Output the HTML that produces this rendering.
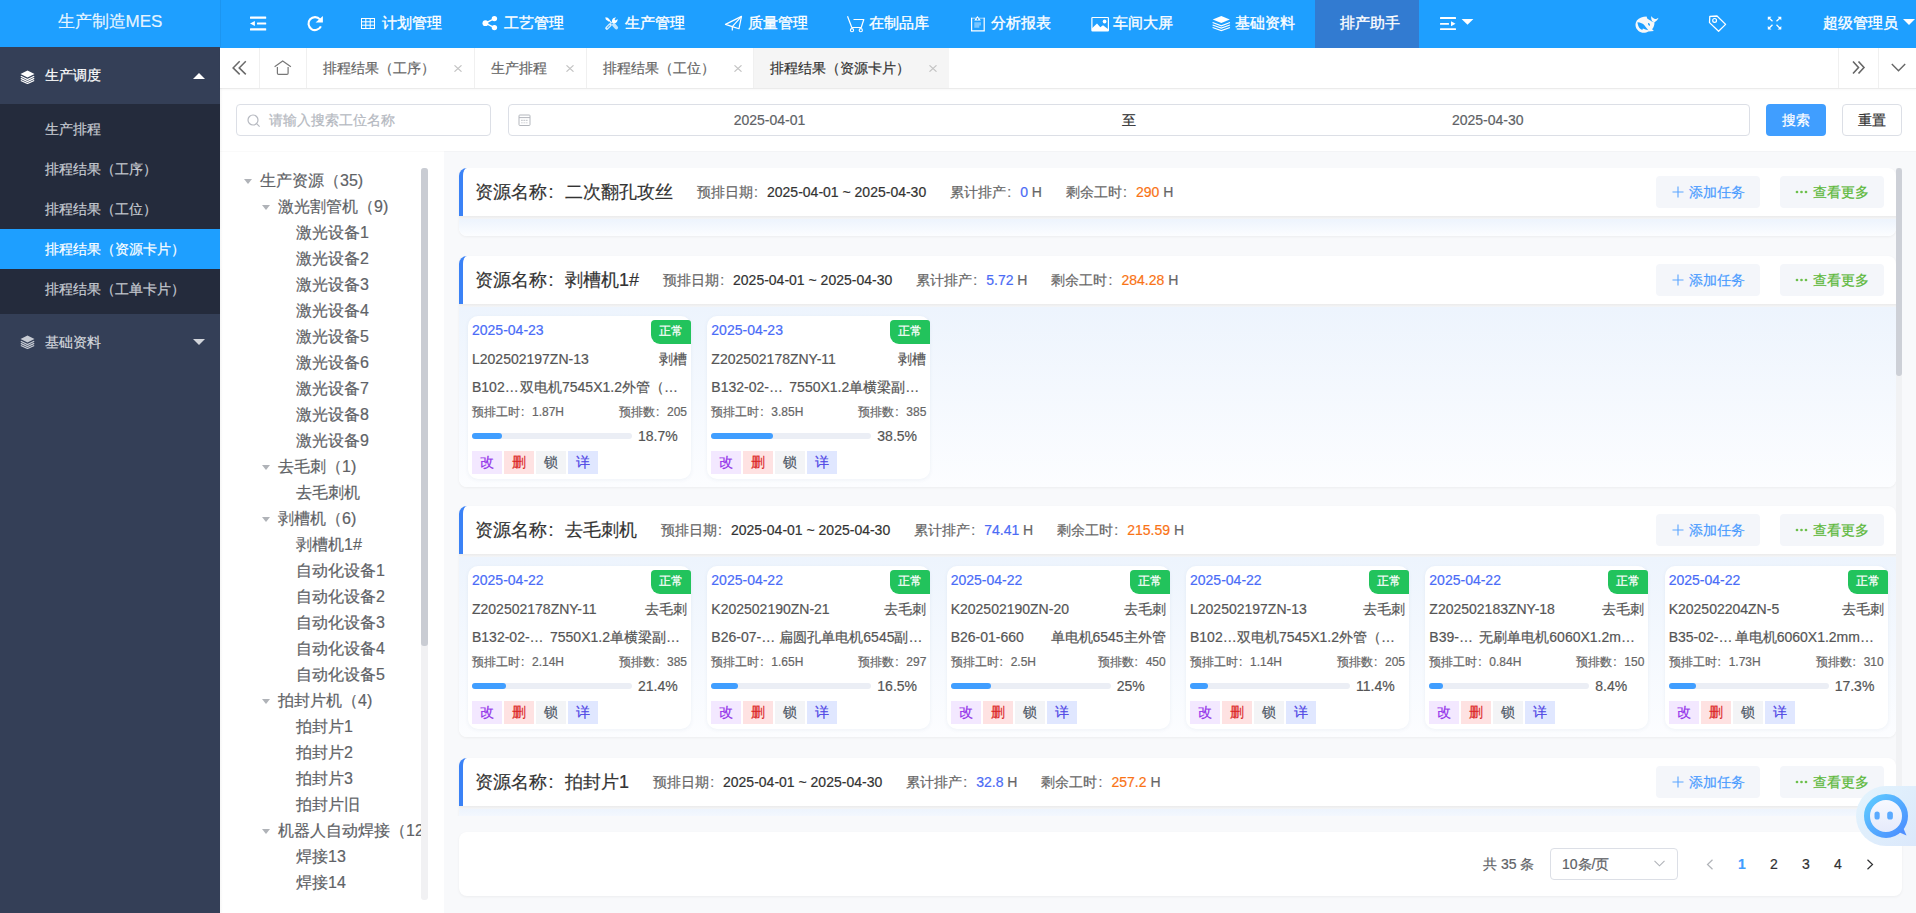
<!DOCTYPE html><html><head><meta charset="utf-8"><title>MES</title><style>
*{box-sizing:border-box;margin:0;padding:0}
html,body{width:1916px;height:913px;overflow:hidden;background:#fff;font-family:"Liberation Sans",sans-serif;font-size:14px;color:#333;-webkit-text-stroke-width:0.2px}
.abs{position:absolute}
.t{position:absolute;white-space:nowrap}
svg{display:block}
.c{display:inline-block;width:1em;text-indent:.08em}
#sidebar{position:absolute;left:0;top:0;width:220px;height:913px;background:#343f57}
#logo{position:absolute;left:0;top:0;width:220px;height:47px;background:#1e9fff;color:rgba(255,255,255,.88);font-size:17px;text-align:center;line-height:44px}
.mh{position:absolute;left:0;width:220px;color:#fff;font-size:14px}
.sub{position:absolute;left:0;top:104px;width:220px;height:210px;background:#242b3c}
.si{position:absolute;left:0;width:220px;height:40px;line-height:40px;padding-left:45px;color:#c6cad1;font-size:14px}
.si.act{background:#1e9fff;color:#fff}
#navbar{position:absolute;left:220px;top:0;width:1696px;height:48px;background:#1e9fff}
.nt{position:absolute;top:0;height:47px;line-height:46px;color:#fff;font-size:15px;white-space:nowrap;-webkit-text-stroke:0.35px #fff}
#tabs{position:absolute;left:220px;top:48px;width:1696px;height:41px;background:#fff;border-bottom:1px solid #ebebeb;box-shadow:0 1px 2px rgba(0,0,0,.03)}
.tab{position:absolute;top:0;height:40px;line-height:40px;font-size:14px;color:#666;border-left:1px solid #f0f0f0;white-space:nowrap}
.tab .x{position:absolute;top:17px;width:8px;height:7px}
#tree{position:absolute;left:220px;top:151px;width:224px;height:762px;background:#fff}
.tn{position:absolute;height:26px;line-height:26px;font-size:16px;color:#606266;white-space:nowrap}
.caret{position:absolute;width:0;height:0;border-left:4.5px solid transparent;border-right:4.5px solid transparent;border-top:5px solid #b0b3b8}
#right{position:absolute;left:444px;top:151px;width:1472px;height:762px;background:#f8f9fb}
.rc{position:absolute;left:459px;width:1437px;background:#fff;border-radius:8px;box-shadow:0 1px 3px rgba(0,0,0,.05)}
.rh{position:absolute;left:0;top:0;width:1437px;height:48px;border-left:4px solid #3b82f6;border-radius:8px 0 0 0}
.band{position:absolute;left:0;top:48px;width:1437px;height:3px;background:linear-gradient(#ebebeb,#f4f5f7)}
.rb{position:absolute;left:0;top:51px;width:1437px;background:linear-gradient(#edf4fd,#fcfdff);border-radius:0 0 8px 8px}
.btn2{position:absolute;top:8px;width:104px;height:32px;background:#f4f6fa;border-radius:4px;font-size:14px;line-height:32px;white-space:nowrap}
.tc{position:absolute;width:223px;height:163px;background:#fff;border-radius:10px;box-shadow:0 1px 4px rgba(30,60,120,.06)}
.badge{position:absolute;right:0;top:4px;width:40px;height:24px;background:#22c35c;color:#fff;font-size:12px;line-height:23px;text-align:center;border-radius:4px 3px 0 9px}
.pb{position:absolute;left:4px;top:117px;width:160px;height:6px;background:#ebeef5;border-radius:3px}
.pf{position:absolute;left:0;top:0;height:6px;background:#409eff;border-radius:3px}
.ab{position:absolute;top:135px;width:30px;height:23px;font-size:14px;line-height:23px;text-align:center}
</style></head><body><div id="sidebar"><div id="logo">生产制造MES</div><div class="mh" style="top:47px;height:57px"><svg class="abs" style="left:20px;top:23px" width="15" height="14" viewBox="0 0 15 14"><path d="M7.5 0.5 L14.5 4 L7.5 7.5 L0.5 4 Z" fill="#fff"/><path d="M0.8 6.2 L7.5 9.6 L14.2 6.2" fill="none" stroke="#fff" stroke-width="1.2"/><path d="M0.8 8.4 L7.5 11.6 L14.2 8.4" fill="none" stroke="#fff" stroke-width="1.2"/><path d="M0.8 10.5 L7.5 13.5 L14.2 10.5" fill="none" stroke="#fff" stroke-width="1.2"/></svg><div class="t" style="left:45px;top:0;line-height:57px">生产调度</div><div class="abs" style="left:193px;top:26px;width:0;height:0;border-left:6px solid transparent;border-right:6px solid transparent;border-bottom:6px solid #fff"></div></div><div class="sub"><div class="si" style="top:5px">生产排程</div><div class="si" style="top:45px">排程结果（工序）</div><div class="si" style="top:85px">排程结果（工位）</div><div class="si act" style="top:125px">排程结果（资源卡片）</div><div class="si" style="top:165px">排程结果（工单卡片）</div></div><div class="mh" style="top:314px;height:56px;color:#d2d5db"><svg class="abs" style="left:20px;top:21px" width="15" height="14" viewBox="0 0 15 14"><path d="M7.5 0.5 L14.5 4 L7.5 7.5 L0.5 4 Z" fill="#c8ccd4"/><path d="M0.8 6.2 L7.5 9.6 L14.2 6.2" fill="none" stroke="#c8ccd4" stroke-width="1.2"/><path d="M0.8 8.4 L7.5 11.6 L14.2 8.4" fill="none" stroke="#c8ccd4" stroke-width="1.2"/><path d="M0.8 10.5 L7.5 13.5 L14.2 10.5" fill="none" stroke="#c8ccd4" stroke-width="1.2"/></svg><div class="t" style="left:45px;top:0;line-height:56px">基础资料</div><div class="abs" style="left:193px;top:25px;width:0;height:0;border-left:6px solid transparent;border-right:6px solid transparent;border-top:6px solid #d2d5db"></div></div></div><div id="navbar"><div class="abs" style="left:0;top:0;width:1px;height:47px;background:rgba(0,0,0,.06)"></div><svg class="abs" style="left:30px;top:15px" width="17" height="16" viewBox="0 0 17 16"><rect x="0" y="1.6" width="16.2" height="2.1" rx="0.5" fill="#fff"/><rect x="7" y="7.4" width="9.2" height="2.1" rx="0.5" fill="#fff"/><path d="M0 8.5L4.9 6V11Z" fill="#fff"/><rect x="0" y="13.3" width="16.2" height="2.1" rx="0.5" fill="#fff"/></svg><svg class="abs" style="left:87px;top:15px" width="17" height="17" viewBox="0 0 17 17"><path d="M12.98 4.42 A6.5 6.5 0 1 0 13.9 11.35" fill="none" stroke="#fff" stroke-width="2.1"/><path d="M8.6 7.6L15.9 7.6L15.9 1.1Z" fill="#fff"/></svg><svg class="abs" style="left:141px;top:18px" width="14" height="11" viewBox="0 0 14 11"><rect x="0.5" y="0.5" width="13" height="10" fill="none" stroke="#fff" stroke-width="1"/><path d="M0 3.8H14M0 7.2H14M4.8 0V11M9.2 0V11" stroke="#fff" stroke-width="1"/></svg><div class="nt" style="left:162px">计划管理</div><svg class="abs" style="left:262px;top:15px" width="16" height="16" viewBox="0 0 16 16"><circle cx="12.4" cy="3.6" r="2.7" fill="#fff"/><circle cx="3.4" cy="8.2" r="2.9" fill="#fff"/><circle cx="12.4" cy="12.6" r="2.7" fill="#fff"/><path d="M3.4 8.2L12.4 3.6M3.4 8.2L12.4 12.6" stroke="#fff" stroke-width="1.5"/></svg><div class="nt" style="left:284px">工艺管理</div><svg class="abs" style="left:384px;top:16px" width="15" height="15" viewBox="0 0 15 15"><path d="M1.3 1.3L3.8 1.8L6.4 4.4L5 5.8L1.8 3.6Z" fill="#fff"/><path d="M5.8 5.2L7.6 7" stroke="#fff" stroke-width="1.1"/><path d="M2.9 12.1L6.1 8.9" stroke="rgba(255,255,255,.85)" stroke-width="3.4" stroke-linecap="round"/><path d="M3.4 11.6L5.6 9.4" stroke="#1e9fff" stroke-width="1.2" stroke-linecap="round" opacity=".7"/><path d="M9.8 8.8L12.3 11.6" stroke="rgba(255,255,255,.72)" stroke-width="3.6" stroke-linecap="round"/><path d="M8.2 6.8C7.5 5.1 8 3.1 9.6 2C10.4 1.5 11.3 1.3 12.1 1.5L10.5 3.3L11.7 4.5L13.5 3C13.8 4.6 13.1 6.2 11.7 7C10.6 7.6 9.3 7.6 8.2 6.8Z" fill="#fff"/></svg><div class="nt" style="left:405px">生产管理</div><svg class="abs" style="left:504px;top:15px" width="19" height="17" viewBox="0 0 19 17"><path d="M17.5 1.4L1.5 9.4L8.3 11.6L15 13.7Z" fill="none" stroke="#fff" stroke-width="1.2" stroke-linejoin="round"/><path d="M17.5 1.4L8.3 11.6V15.5" fill="none" stroke="#fff" stroke-width="1.2" stroke-linejoin="round"/></svg><div class="nt" style="left:528px">质量管理</div><svg class="abs" style="left:626px;top:15px" width="19" height="18" viewBox="0 0 19 18"><path d="M1.5 1.3L5.8 12.5H15.2L17.8 4.5H7.5" fill="none" stroke="#fff" stroke-width="1.2" stroke-linejoin="round"/><circle cx="6" cy="15.2" r="1.6" fill="none" stroke="#fff" stroke-width="1.1"/><circle cx="14.8" cy="15.2" r="1.6" fill="none" stroke="#fff" stroke-width="1.1"/></svg><div class="nt" style="left:649px">在制品库</div><svg class="abs" style="left:750px;top:15px" width="15" height="17" viewBox="0 0 15 17"><path d="M1.6 2.8V15.9H14.2V2.8" fill="none" stroke="#fff" stroke-width="1.2"/><path d="M1 3.2H14.8" stroke="rgba(255,255,255,.6)" stroke-width="1"/><path d="M7.4 1.1L4.3 5.6H10.8Z" fill="#fff"/><circle cx="7.5" cy="4" r="0.9" fill="#1e9fff"/><path d="M4.3 7.2H11V10.6H9.3V12.7H4.3Z" fill="rgba(255,255,255,.4)"/></svg><div class="nt" style="left:771px">分析报表</div><svg class="abs" style="left:871px;top:15px" width="19" height="17" viewBox="0 0 19 17"><rect x="0.9" y="2.5" width="16.5" height="13.3" rx="0.6" fill="none" stroke="#fff" stroke-width="1.2"/><path d="M1 13.2L6 8.5L9.3 12.2L12 10.2L17.3 14.2V15.9H1Z" fill="#fff"/><circle cx="13.6" cy="6.5" r="1.9" fill="#fff"/></svg><div class="nt" style="left:893px">车间大屏</div><svg class="abs" style="left:992px;top:15px" width="19" height="17" viewBox="0 0 19 17"><path d="M0.7 4.5L9.3 1L17.8 4.5L9.3 7.9Z" fill="#fff"/><path d="M0.6 7.6L9.3 10.8L18 7.6M0.6 10L9.3 13.1L18 10M0.6 12.5L9.3 15.6L18 12.5" fill="none" stroke="#fff" stroke-width="1.1"/></svg><div class="nt" style="left:1015px">基础资料</div><div class="abs" style="left:1095px;top:0;width:104px;height:48px;background:#327bd1"></div><div class="nt" style="left:1120px">排产助手</div><svg class="abs" style="left:1220px;top:15px" width="34" height="16" viewBox="0 0 34 16"><rect x="0" y="2.1" width="16" height="1.8" rx="0.5" fill="#fff"/><rect x="0" y="7.9" width="9" height="1.8" rx="0.5" fill="#fff"/><path d="M11 6.3L15.5 8.8L11 11.3Z" fill="#fff"/><rect x="0" y="13.3" width="16" height="1.8" rx="0.5" fill="#fff"/><path d="M21.6 4H33.4L27.5 9.7Z" fill="#fff"/></svg><svg class="abs" style="left:1415px;top:15px" width="25" height="19" viewBox="0 0 25 19"><path d="M11.6 1.4C8 1.6 4 2.5 1.8 5.5C-0.5 9 0.3 13.5 3.5 16C6 18.2 10.5 18.4 13.4 16.5L18.9 15.9L17.1 14.3C18.8 12.5 19.5 10 19.5 7.3L17.1 6.7C15.5 5.5 13.5 4.5 12.2 3.6Z" fill="#f8f8f8"/><path d="M16.2 1.1C16 3.5 16.5 5.5 17.4 6.6L19.5 7.3C21.5 6 23 4.5 23.5 2.7C22 3.8 20.8 4.2 20 4C18.5 3.5 17 2.5 16.2 1.1Z" fill="#f8f8f8"/><path d="M2.4 7.3C5.5 7.5 8 8.5 9.4 10.3C11 12.3 12.2 14 13.4 15.2C11.5 14.8 9.5 14 7.9 13.4L7.3 14.9C5 14.3 3.2 12.2 2.4 7.3Z" fill="#1e9fff"/><ellipse cx="14" cy="9.4" rx="0.8" ry="1.5" transform="rotate(-30 14 9.4)" fill="#1e9fff"/></svg><svg class="abs" style="left:1488px;top:15px" width="19" height="18" viewBox="0 0 19 18"><path d="M1.8 1.4L9 1L17.6 9.4L10.6 16.2L1.5 7.6Z" fill="none" stroke="#fff" stroke-width="1.3" stroke-linejoin="round"/><circle cx="6.6" cy="5.4" r="1.9" fill="none" stroke="#fff" stroke-width="1.2"/></svg><svg class="abs" style="left:1547px;top:16px" width="15" height="14" viewBox="0 0 15 14"><path d="M0.8 0.7H4.5L0.8 4.3ZM14.3 0.7H10.6L14.3 4.3ZM0.8 13.6H4.5L0.8 10ZM14.3 13.6H10.6L14.3 10Z" fill="#fff"/><path d="M2 2L5.5 5.2M13 2L9.5 5.2M2 12.3L5.5 8.8M13 12.3L9.5 8.8" stroke="#fff" stroke-width="1.3"/></svg><div class="nt" style="left:1603px">超级管理员</div><div class="abs" style="left:1683px;top:19px;width:0;height:0;border-left:6px solid transparent;border-right:6px solid transparent;border-top:6px solid #fff"></div></div><div id="tabs"><svg class="abs" style="left:12px;top:12px" width="16" height="16" viewBox="0 0 16 16"><path d="M7.7 1.3L1.1 7.9L7.7 14.4M13.8 1.3L7.2 7.9L13.8 14.4" fill="none" stroke="#6a6a6a" stroke-width="1.5"/></svg><div class="abs" style="left:39px;top:0;width:1px;height:40px;background:#f0f0f0"></div><svg class="abs" style="left:54px;top:11px" width="18" height="17" viewBox="0 0 18 17"><path d="M0.6 7.7L8.7 2.1L16.9 7.7" fill="none" stroke="#777" stroke-width="1.2"/><path d="M3.4 8V14.2Q3.4 15.4 4.6 15.4H12.9Q14.1 15.4 14.1 14.2V8" fill="none" stroke="#777" stroke-width="1.2"/></svg><div class="tab" style="left:86px;width:168px;"><span class="t" style="left:16px;top:0">排程结果（工序）</span><svg class="x" style="left:147px" viewBox="0 0 8 7"><path d="M0.5 0.3L7.5 6.7M7.5 0.3L0.5 6.7" stroke="#c2c2c2" stroke-width="1.1"/></svg></div><div class="tab" style="left:254px;width:112px;"><span class="t" style="left:16px;top:0">生产排程</span><svg class="x" style="left:91px" viewBox="0 0 8 7"><path d="M0.5 0.3L7.5 6.7M7.5 0.3L0.5 6.7" stroke="#c2c2c2" stroke-width="1.1"/></svg></div><div class="tab" style="left:366px;width:168px;"><span class="t" style="left:16px;top:0">排程结果（工位）</span><svg class="x" style="left:147px" viewBox="0 0 8 7"><path d="M0.5 0.3L7.5 6.7M7.5 0.3L0.5 6.7" stroke="#c2c2c2" stroke-width="1.1"/></svg></div><div class="tab" style="left:533px;width:196px;background:#f5f5f5;color:#333;"><span class="t" style="left:16px;top:0">排程结果（资源卡片）</span><svg class="x" style="left:175px" viewBox="0 0 8 7"><path d="M0.5 0.3L7.5 6.7M7.5 0.3L0.5 6.7" stroke="#c2c2c2" stroke-width="1.1"/></svg></div><div class="abs" style="left:1618px;top:0;width:1px;height:40px;background:#f0f0f0"></div><svg class="abs" style="left:1632px;top:12px" width="14" height="15" viewBox="0 0 14 15"><path d="M1 1.5L6.5 7.5L1 13.5M6.5 1.5L12 7.5L6.5 13.5" fill="none" stroke="#666" stroke-width="1.6"/></svg><div class="abs" style="left:1658px;top:0;width:1px;height:40px;background:#f0f0f0"></div><svg class="abs" style="left:1671px;top:15px" width="15" height="9" viewBox="0 0 15 9"><path d="M0.8 1L7.5 7.8L14.2 1" fill="none" stroke="#666" stroke-width="1.4"/></svg></div><div class="abs" style="left:236px;top:104px;width:255px;height:32px;border:1px solid #dcdfe6;border-radius:4px"></div><svg class="abs" style="left:247px;top:113.7px" width="14" height="14" viewBox="0 0 14 14"><circle cx="6" cy="6" r="5" fill="none" stroke="#b6b9c0" stroke-width="1.2"/><path d="M9.6 9.6L12.6 12.6" stroke="#b6b9c0" stroke-width="1.2"/></svg><div class="t" style="left:269px;top:104px;line-height:32px;color:#b4b8c0;font-size:14px">请输入搜索工位名称</div><div class="abs" style="left:508px;top:104px;width:1242px;height:32px;border:1px solid #dcdfe6;border-radius:4px"></div><svg class="abs" style="left:518px;top:114px" width="13" height="12" viewBox="0 0 13 12"><rect x="1" y="1" width="11" height="10.5" rx="0.8" fill="none" stroke="#b4b7bd" stroke-width="1"/><path d="M1 3.6H12" stroke="#b4b7bd" stroke-width="1"/><path d="M3 6.3H10" stroke="#b8bbc1" stroke-width="0.9" stroke-dasharray="1.8 0.6"/><path d="M3 8.8H10" stroke="#d0d2d6" stroke-width="0.9" stroke-dasharray="1.8 0.6"/></svg><div class="t" style="left:669.5px;width:200px;text-align:center;top:104px;line-height:32px;color:#606266">2025-04-01</div><div class="t" style="left:1029px;width:200px;text-align:center;top:104px;line-height:32px;color:#303133">至</div><div class="t" style="left:1387.7px;width:200px;text-align:center;top:104px;line-height:32px;color:#606266">2025-04-30</div><div class="abs" style="left:1766px;top:104px;width:60px;height:32px;background:#409eff;border-radius:4px;color:#fff;text-align:center;line-height:32px">搜索</div><div class="abs" style="left:1842px;top:104px;width:60px;height:32px;border:1px solid #dcdfe6;border-radius:4px;color:#333;text-align:center;line-height:30px">重置</div><div id="tree"><div class="abs" style="left:0;top:0;width:201px;height:762px;overflow:hidden"><div class="caret" style="left:24px;top:28px"></div><div class="tn" style="left:40px;top:17px">生产资源（35)</div><div class="caret" style="left:42px;top:54px"></div><div class="tn" style="left:58px;top:43px">激光割管机（9)</div><div class="tn" style="left:76px;top:69px">激光设备1</div><div class="tn" style="left:76px;top:95px">激光设备2</div><div class="tn" style="left:76px;top:121px">激光设备3</div><div class="tn" style="left:76px;top:147px">激光设备4</div><div class="tn" style="left:76px;top:173px">激光设备5</div><div class="tn" style="left:76px;top:199px">激光设备6</div><div class="tn" style="left:76px;top:225px">激光设备7</div><div class="tn" style="left:76px;top:251px">激光设备8</div><div class="tn" style="left:76px;top:277px">激光设备9</div><div class="caret" style="left:42px;top:314px"></div><div class="tn" style="left:58px;top:303px">去毛刺（1)</div><div class="tn" style="left:76px;top:329px">去毛刺机</div><div class="caret" style="left:42px;top:366px"></div><div class="tn" style="left:58px;top:355px">剥槽机（6)</div><div class="tn" style="left:76px;top:381px">剥槽机1#</div><div class="tn" style="left:76px;top:407px">自动化设备1</div><div class="tn" style="left:76px;top:433px">自动化设备2</div><div class="tn" style="left:76px;top:459px">自动化设备3</div><div class="tn" style="left:76px;top:485px">自动化设备4</div><div class="tn" style="left:76px;top:511px">自动化设备5</div><div class="caret" style="left:42px;top:548px"></div><div class="tn" style="left:58px;top:537px">拍封片机（4)</div><div class="tn" style="left:76px;top:563px">拍封片1</div><div class="tn" style="left:76px;top:589px">拍封片2</div><div class="tn" style="left:76px;top:615px">拍封片3</div><div class="tn" style="left:76px;top:641px">拍封片旧</div><div class="caret" style="left:42px;top:678px"></div><div class="tn" style="left:58px;top:667px">机器人自动焊接（12)</div><div class="tn" style="left:76px;top:693px">焊接13</div><div class="tn" style="left:76px;top:719px">焊接14</div></div><div class="abs" style="left:201px;top:17px;width:7px;height:732px;background:#f1f1f3;border-radius:3px"></div><div class="abs" style="left:201px;top:17px;width:7px;height:478px;background:#c9ccd3;border-radius:3px"></div></div><div id="right"></div><div class="abs" style="left:220px;top:88px;width:3px;height:825px;background:linear-gradient(90deg,rgba(0,0,0,.035),rgba(0,0,0,0))"></div><div class="abs" style="left:220px;top:151px;width:1696px;height:1px;background:rgba(0,0,0,.02)"></div><div class="abs" style="left:0;top:168px;width:1916px;height:648px;overflow:hidden"><div class="rc" style="top:0px;height:68px"><div class="rh"></div><div class="band"></div><div class="abs" style="left:16px;top:0;height:48px;display:flex;align-items:center;white-space:nowrap;gap:24px"><span style="font-size:18px;color:#333">资源名称<span class="c">:</span>二次翻孔攻丝</span><span style="color:#666;position:relative;top:1px">预排日期<span class="c">:</span><span style="color:#333">2025-04-01 ~ 2025-04-30</span></span><span style="color:#666;position:relative;top:1px">累计排产<span class="c">:</span><span style="color:#4b6bf5">0</span> H</span><span style="color:#666;position:relative;top:1px">剩余工时<span class="c">:</span><span style="color:#f97316">290</span> H</span></div><div class="btn2" style="left:1197px;color:#4b9cff"><svg class="abs" style="left:16px;top:10px" width="12" height="12" viewBox="0 0 12 12"><path d="M6 0.5V11.5M0.5 6H11.5" stroke="#5aa5ff" stroke-width="1.1"/></svg><span class="t" style="left:33px;top:0">添加任务</span></div><div class="btn2" style="left:1321px;color:#5cb83a"><svg class="abs" style="left:15px;top:14px" width="13" height="4" viewBox="0 0 13 4"><circle cx="2" cy="2" r="1.35" fill="#6cc04a"/><circle cx="6.5" cy="2" r="1.35" fill="#6cc04a"/><circle cx="11" cy="2" r="1.35" fill="#6cc04a"/></svg><span class="t" style="left:33px;top:0">查看更多</span></div><div class="rb" style="height:17px"></div></div><div class="rc" style="top:88px;height:231px"><div class="rh"></div><div class="band"></div><div class="abs" style="left:16px;top:0;height:48px;display:flex;align-items:center;white-space:nowrap;gap:24px"><span style="font-size:18px;color:#333">资源名称<span class="c">:</span>剥槽机1#</span><span style="color:#666;position:relative;top:1px">预排日期<span class="c">:</span><span style="color:#333">2025-04-01 ~ 2025-04-30</span></span><span style="color:#666;position:relative;top:1px">累计排产<span class="c">:</span><span style="color:#4b6bf5">5.72</span> H</span><span style="color:#666;position:relative;top:1px">剩余工时<span class="c">:</span><span style="color:#f97316">284.28</span> H</span></div><div class="btn2" style="left:1197px;color:#4b9cff"><svg class="abs" style="left:16px;top:10px" width="12" height="12" viewBox="0 0 12 12"><path d="M6 0.5V11.5M0.5 6H11.5" stroke="#5aa5ff" stroke-width="1.1"/></svg><span class="t" style="left:33px;top:0">添加任务</span></div><div class="btn2" style="left:1321px;color:#5cb83a"><svg class="abs" style="left:15px;top:14px" width="13" height="4" viewBox="0 0 13 4"><circle cx="2" cy="2" r="1.35" fill="#6cc04a"/><circle cx="6.5" cy="2" r="1.35" fill="#6cc04a"/><circle cx="11" cy="2" r="1.35" fill="#6cc04a"/></svg><span class="t" style="left:33px;top:0">查看更多</span></div><div class="rb" style="height:180px"><div class="tc" style="left:9.00px;top:9px"><div class="t" style="left:4px;top:6px;line-height:16px;color:#4a6cf7">2025-04-23</div><div class="badge">正常</div><div class="t" style="left:4px;top:34.5px;line-height:16px;color:#555">L202502197ZN-13</div><div class="t" style="right:4px;top:34.5px;line-height:16px;color:#555">剥槽</div><div class="t" style="left:4px;top:62.7px;line-height:16px;color:#555">B102…</div><div class="t" style="left:52px;top:62.7px;line-height:16px;color:#555">双电机7545X1.2外管（…</div><div class="t" style="left:4px;top:89px;line-height:14px;font-size:12px;color:#666">预排工时<span class="c">:</span>1.87H</div><div class="t" style="right:4px;top:89px;line-height:14px;font-size:12px;color:#666">预排数<span class="c">:</span>205</div><div class="pb"><div class="pf" style="width:29.9px"></div></div><div class="t" style="left:170px;top:111.7px;line-height:16px;color:#555">18.7%</div><div class="ab" style="left:4px;background:#f3e8ff;color:#9333ea">改</div><div class="ab" style="left:36px;background:#fee2e2;color:#dc2626">删</div><div class="ab" style="left:68px;background:#f3f4f6;color:#4b5563">锁</div><div class="ab" style="left:100px;background:#e0e7ff;color:#4f46e5">详</div></div><div class="tc" style="left:248.33px;top:9px"><div class="t" style="left:4px;top:6px;line-height:16px;color:#4a6cf7">2025-04-23</div><div class="badge">正常</div><div class="t" style="left:4px;top:34.5px;line-height:16px;color:#555">Z202502178ZNY-11</div><div class="t" style="right:4px;top:34.5px;line-height:16px;color:#555">剥槽</div><div class="t" style="left:4px;top:62.7px;line-height:16px;color:#555">B132-02-…</div><div class="t" style="left:82px;top:62.7px;line-height:16px;color:#555">7550X1.2单横梁副…</div><div class="t" style="left:4px;top:89px;line-height:14px;font-size:12px;color:#666">预排工时<span class="c">:</span>3.85H</div><div class="t" style="right:4px;top:89px;line-height:14px;font-size:12px;color:#666">预排数<span class="c">:</span>385</div><div class="pb"><div class="pf" style="width:61.6px"></div></div><div class="t" style="left:170px;top:111.7px;line-height:16px;color:#555">38.5%</div><div class="ab" style="left:4px;background:#f3e8ff;color:#9333ea">改</div><div class="ab" style="left:36px;background:#fee2e2;color:#dc2626">删</div><div class="ab" style="left:68px;background:#f3f4f6;color:#4b5563">锁</div><div class="ab" style="left:100px;background:#e0e7ff;color:#4f46e5">详</div></div></div></div><div class="rc" style="top:338px;height:231px"><div class="rh"></div><div class="band"></div><div class="abs" style="left:16px;top:0;height:48px;display:flex;align-items:center;white-space:nowrap;gap:24px"><span style="font-size:18px;color:#333">资源名称<span class="c">:</span>去毛刺机</span><span style="color:#666;position:relative;top:1px">预排日期<span class="c">:</span><span style="color:#333">2025-04-01 ~ 2025-04-30</span></span><span style="color:#666;position:relative;top:1px">累计排产<span class="c">:</span><span style="color:#4b6bf5">74.41</span> H</span><span style="color:#666;position:relative;top:1px">剩余工时<span class="c">:</span><span style="color:#f97316">215.59</span> H</span></div><div class="btn2" style="left:1197px;color:#4b9cff"><svg class="abs" style="left:16px;top:10px" width="12" height="12" viewBox="0 0 12 12"><path d="M6 0.5V11.5M0.5 6H11.5" stroke="#5aa5ff" stroke-width="1.1"/></svg><span class="t" style="left:33px;top:0">添加任务</span></div><div class="btn2" style="left:1321px;color:#5cb83a"><svg class="abs" style="left:15px;top:14px" width="13" height="4" viewBox="0 0 13 4"><circle cx="2" cy="2" r="1.35" fill="#6cc04a"/><circle cx="6.5" cy="2" r="1.35" fill="#6cc04a"/><circle cx="11" cy="2" r="1.35" fill="#6cc04a"/></svg><span class="t" style="left:33px;top:0">查看更多</span></div><div class="rb" style="height:180px"><div class="tc" style="left:9.00px;top:9px"><div class="t" style="left:4px;top:6px;line-height:16px;color:#4a6cf7">2025-04-22</div><div class="badge">正常</div><div class="t" style="left:4px;top:34.5px;line-height:16px;color:#555">Z202502178ZNY-11</div><div class="t" style="right:4px;top:34.5px;line-height:16px;color:#555">去毛刺</div><div class="t" style="left:4px;top:62.7px;line-height:16px;color:#555">B132-02-…</div><div class="t" style="left:82px;top:62.7px;line-height:16px;color:#555">7550X1.2单横梁副…</div><div class="t" style="left:4px;top:89px;line-height:14px;font-size:12px;color:#666">预排工时<span class="c">:</span>2.14H</div><div class="t" style="right:4px;top:89px;line-height:14px;font-size:12px;color:#666">预排数<span class="c">:</span>385</div><div class="pb"><div class="pf" style="width:34.2px"></div></div><div class="t" style="left:170px;top:111.7px;line-height:16px;color:#555">21.4%</div><div class="ab" style="left:4px;background:#f3e8ff;color:#9333ea">改</div><div class="ab" style="left:36px;background:#fee2e2;color:#dc2626">删</div><div class="ab" style="left:68px;background:#f3f4f6;color:#4b5563">锁</div><div class="ab" style="left:100px;background:#e0e7ff;color:#4f46e5">详</div></div><div class="tc" style="left:248.33px;top:9px"><div class="t" style="left:4px;top:6px;line-height:16px;color:#4a6cf7">2025-04-22</div><div class="badge">正常</div><div class="t" style="left:4px;top:34.5px;line-height:16px;color:#555">K202502190ZN-21</div><div class="t" style="right:4px;top:34.5px;line-height:16px;color:#555">去毛刺</div><div class="t" style="left:4px;top:62.7px;line-height:16px;color:#555">B26-07-…</div><div class="t" style="left:72px;top:62.7px;line-height:16px;color:#555">扁圆孔单电机6545副…</div><div class="t" style="left:4px;top:89px;line-height:14px;font-size:12px;color:#666">预排工时<span class="c">:</span>1.65H</div><div class="t" style="right:4px;top:89px;line-height:14px;font-size:12px;color:#666">预排数<span class="c">:</span>297</div><div class="pb"><div class="pf" style="width:26.4px"></div></div><div class="t" style="left:170px;top:111.7px;line-height:16px;color:#555">16.5%</div><div class="ab" style="left:4px;background:#f3e8ff;color:#9333ea">改</div><div class="ab" style="left:36px;background:#fee2e2;color:#dc2626">删</div><div class="ab" style="left:68px;background:#f3f4f6;color:#4b5563">锁</div><div class="ab" style="left:100px;background:#e0e7ff;color:#4f46e5">详</div></div><div class="tc" style="left:487.67px;top:9px"><div class="t" style="left:4px;top:6px;line-height:16px;color:#4a6cf7">2025-04-22</div><div class="badge">正常</div><div class="t" style="left:4px;top:34.5px;line-height:16px;color:#555">K202502190ZN-20</div><div class="t" style="right:4px;top:34.5px;line-height:16px;color:#555">去毛刺</div><div class="t" style="left:4px;top:62.7px;line-height:16px;color:#555">B26-01-660</div><div class="t" style="right:4px;top:62.7px;line-height:16px;color:#555">单电机6545主外管</div><div class="t" style="left:4px;top:89px;line-height:14px;font-size:12px;color:#666">预排工时<span class="c">:</span>2.5H</div><div class="t" style="right:4px;top:89px;line-height:14px;font-size:12px;color:#666">预排数<span class="c">:</span>450</div><div class="pb"><div class="pf" style="width:40.0px"></div></div><div class="t" style="left:170px;top:111.7px;line-height:16px;color:#555">25%</div><div class="ab" style="left:4px;background:#f3e8ff;color:#9333ea">改</div><div class="ab" style="left:36px;background:#fee2e2;color:#dc2626">删</div><div class="ab" style="left:68px;background:#f3f4f6;color:#4b5563">锁</div><div class="ab" style="left:100px;background:#e0e7ff;color:#4f46e5">详</div></div><div class="tc" style="left:727.00px;top:9px"><div class="t" style="left:4px;top:6px;line-height:16px;color:#4a6cf7">2025-04-22</div><div class="badge">正常</div><div class="t" style="left:4px;top:34.5px;line-height:16px;color:#555">L202502197ZN-13</div><div class="t" style="right:4px;top:34.5px;line-height:16px;color:#555">去毛刺</div><div class="t" style="left:4px;top:62.7px;line-height:16px;color:#555">B102…</div><div class="t" style="left:51px;top:62.7px;line-height:16px;color:#555">双电机7545X1.2外管（…</div><div class="t" style="left:4px;top:89px;line-height:14px;font-size:12px;color:#666">预排工时<span class="c">:</span>1.14H</div><div class="t" style="right:4px;top:89px;line-height:14px;font-size:12px;color:#666">预排数<span class="c">:</span>205</div><div class="pb"><div class="pf" style="width:18.2px"></div></div><div class="t" style="left:170px;top:111.7px;line-height:16px;color:#555">11.4%</div><div class="ab" style="left:4px;background:#f3e8ff;color:#9333ea">改</div><div class="ab" style="left:36px;background:#fee2e2;color:#dc2626">删</div><div class="ab" style="left:68px;background:#f3f4f6;color:#4b5563">锁</div><div class="ab" style="left:100px;background:#e0e7ff;color:#4f46e5">详</div></div><div class="tc" style="left:966.33px;top:9px"><div class="t" style="left:4px;top:6px;line-height:16px;color:#4a6cf7">2025-04-22</div><div class="badge">正常</div><div class="t" style="left:4px;top:34.5px;line-height:16px;color:#555">Z202502183ZNY-18</div><div class="t" style="right:4px;top:34.5px;line-height:16px;color:#555">去毛刺</div><div class="t" style="left:4px;top:62.7px;line-height:16px;color:#555">B39-…</div><div class="t" style="left:54px;top:62.7px;line-height:16px;color:#555">无刷单电机6060X1.2m…</div><div class="t" style="left:4px;top:89px;line-height:14px;font-size:12px;color:#666">预排工时<span class="c">:</span>0.84H</div><div class="t" style="right:4px;top:89px;line-height:14px;font-size:12px;color:#666">预排数<span class="c">:</span>150</div><div class="pb"><div class="pf" style="width:13.4px"></div></div><div class="t" style="left:170px;top:111.7px;line-height:16px;color:#555">8.4%</div><div class="ab" style="left:4px;background:#f3e8ff;color:#9333ea">改</div><div class="ab" style="left:36px;background:#fee2e2;color:#dc2626">删</div><div class="ab" style="left:68px;background:#f3f4f6;color:#4b5563">锁</div><div class="ab" style="left:100px;background:#e0e7ff;color:#4f46e5">详</div></div><div class="tc" style="left:1205.67px;top:9px"><div class="t" style="left:4px;top:6px;line-height:16px;color:#4a6cf7">2025-04-22</div><div class="badge">正常</div><div class="t" style="left:4px;top:34.5px;line-height:16px;color:#555">K202502204ZN-5</div><div class="t" style="right:4px;top:34.5px;line-height:16px;color:#555">去毛刺</div><div class="t" style="left:4px;top:62.7px;line-height:16px;color:#555">B35-02-…</div><div class="t" style="left:70px;top:62.7px;line-height:16px;color:#555">单电机6060X1.2mm…</div><div class="t" style="left:4px;top:89px;line-height:14px;font-size:12px;color:#666">预排工时<span class="c">:</span>1.73H</div><div class="t" style="right:4px;top:89px;line-height:14px;font-size:12px;color:#666">预排数<span class="c">:</span>310</div><div class="pb"><div class="pf" style="width:27.7px"></div></div><div class="t" style="left:170px;top:111.7px;line-height:16px;color:#555">17.3%</div><div class="ab" style="left:4px;background:#f3e8ff;color:#9333ea">改</div><div class="ab" style="left:36px;background:#fee2e2;color:#dc2626">删</div><div class="ab" style="left:68px;background:#f3f4f6;color:#4b5563">锁</div><div class="ab" style="left:100px;background:#e0e7ff;color:#4f46e5">详</div></div></div></div><div class="rc" style="top:590px;height:68px"><div class="rh"></div><div class="band"></div><div class="abs" style="left:16px;top:0;height:48px;display:flex;align-items:center;white-space:nowrap;gap:24px"><span style="font-size:18px;color:#333">资源名称<span class="c">:</span>拍封片1</span><span style="color:#666;position:relative;top:1px">预排日期<span class="c">:</span><span style="color:#333">2025-04-01 ~ 2025-04-30</span></span><span style="color:#666;position:relative;top:1px">累计排产<span class="c">:</span><span style="color:#4b6bf5">32.8</span> H</span><span style="color:#666;position:relative;top:1px">剩余工时<span class="c">:</span><span style="color:#f97316">257.2</span> H</span></div><div class="btn2" style="left:1197px;color:#4b9cff"><svg class="abs" style="left:16px;top:10px" width="12" height="12" viewBox="0 0 12 12"><path d="M6 0.5V11.5M0.5 6H11.5" stroke="#5aa5ff" stroke-width="1.1"/></svg><span class="t" style="left:33px;top:0">添加任务</span></div><div class="btn2" style="left:1321px;color:#5cb83a"><svg class="abs" style="left:15px;top:14px" width="13" height="4" viewBox="0 0 13 4"><circle cx="2" cy="2" r="1.35" fill="#6cc04a"/><circle cx="6.5" cy="2" r="1.35" fill="#6cc04a"/><circle cx="11" cy="2" r="1.35" fill="#6cc04a"/></svg><span class="t" style="left:33px;top:0">查看更多</span></div><div class="rb" style="height:17px"></div></div></div><div class="abs" style="left:1896px;top:168px;width:6px;height:648px;background:#f1f2f4"></div><div class="abs" style="left:1896px;top:168px;width:6px;height:208px;background:#cdd0d7;border-radius:3px"></div><div class="abs" style="left:459px;top:832px;width:1443px;height:64px;background:#fff;border-radius:8px;box-shadow:0 1px 3px rgba(0,0,0,.05)"></div><div class="t" style="left:1483px;top:856px;line-height:16px;color:#606266">共 35 条</div><div class="abs" style="left:1550px;top:848px;width:128px;height:32px;border:1px solid #dcdfe6;border-radius:4px"></div><div class="t" style="left:1562px;top:856px;line-height:16px;color:#606266">10条/页</div><svg class="abs" style="left:1654px;top:860px" width="11" height="7" viewBox="0 0 11 7"><path d="M0.5 0.8L5.5 5.8L10.5 0.8" fill="none" stroke="#b0b3b8" stroke-width="1.1"/></svg><svg class="abs" style="left:1706px;top:859px" width="8" height="11" viewBox="0 0 8 11"><path d="M6.5 0.8L1.5 5.5L6.5 10.2" fill="none" stroke="#b0b3b8" stroke-width="1.2"/></svg><div class="t" style="left:1726px;width:32px;text-align:center;top:856px;line-height:16px;color:#409eff;font-weight:bold">1</div><div class="t" style="left:1758px;width:32px;text-align:center;top:856px;line-height:16px;color:#303133;font-weight:normal">2</div><div class="t" style="left:1790px;width:32px;text-align:center;top:856px;line-height:16px;color:#303133;font-weight:normal">3</div><div class="t" style="left:1822px;width:32px;text-align:center;top:856px;line-height:16px;color:#303133;font-weight:normal">4</div><svg class="abs" style="left:1866px;top:859px" width="8" height="11" viewBox="0 0 8 11"><path d="M1.5 0.8L6.5 5.5L1.5 10.2" fill="none" stroke="#303133" stroke-width="1.2"/></svg><svg class="abs" style="left:1856px;top:786px" width="60" height="60" viewBox="0 0 60 60"><defs><linearGradient id="g0" x1="0" y1="0" x2="1" y2="1"><stop offset="0" stop-color="#e3f4fd"/><stop offset="1" stop-color="#dbe8fb"/></linearGradient><linearGradient id="g1" x1="0" y1="0" x2="1" y2="1"><stop offset="0" stop-color="#5fcbff"/><stop offset="1" stop-color="#4a8dff"/></linearGradient><linearGradient id="g2" x1="0" y1="0" x2="0" y2="1"><stop offset="0" stop-color="#f8faff"/><stop offset="1" stop-color="#e4e9fb"/></linearGradient></defs><path d="M30 0H60V60H30A30 30 0 0 1 30 0Z" fill="url(#g0)"/><path d="M38 44L50.5 49.6L45.5 38Z" fill="#4f90ff"/><circle cx="30" cy="30" r="19" fill="url(#g2)" stroke="url(#g1)" stroke-width="6"/><rect x="18.5" y="25.5" width="5.2" height="8" rx="2.6" fill="#5aaaff"/><rect x="31.2" y="25.5" width="5.7" height="8" rx="2.6" fill="#5aaaff"/></svg></body></html>
